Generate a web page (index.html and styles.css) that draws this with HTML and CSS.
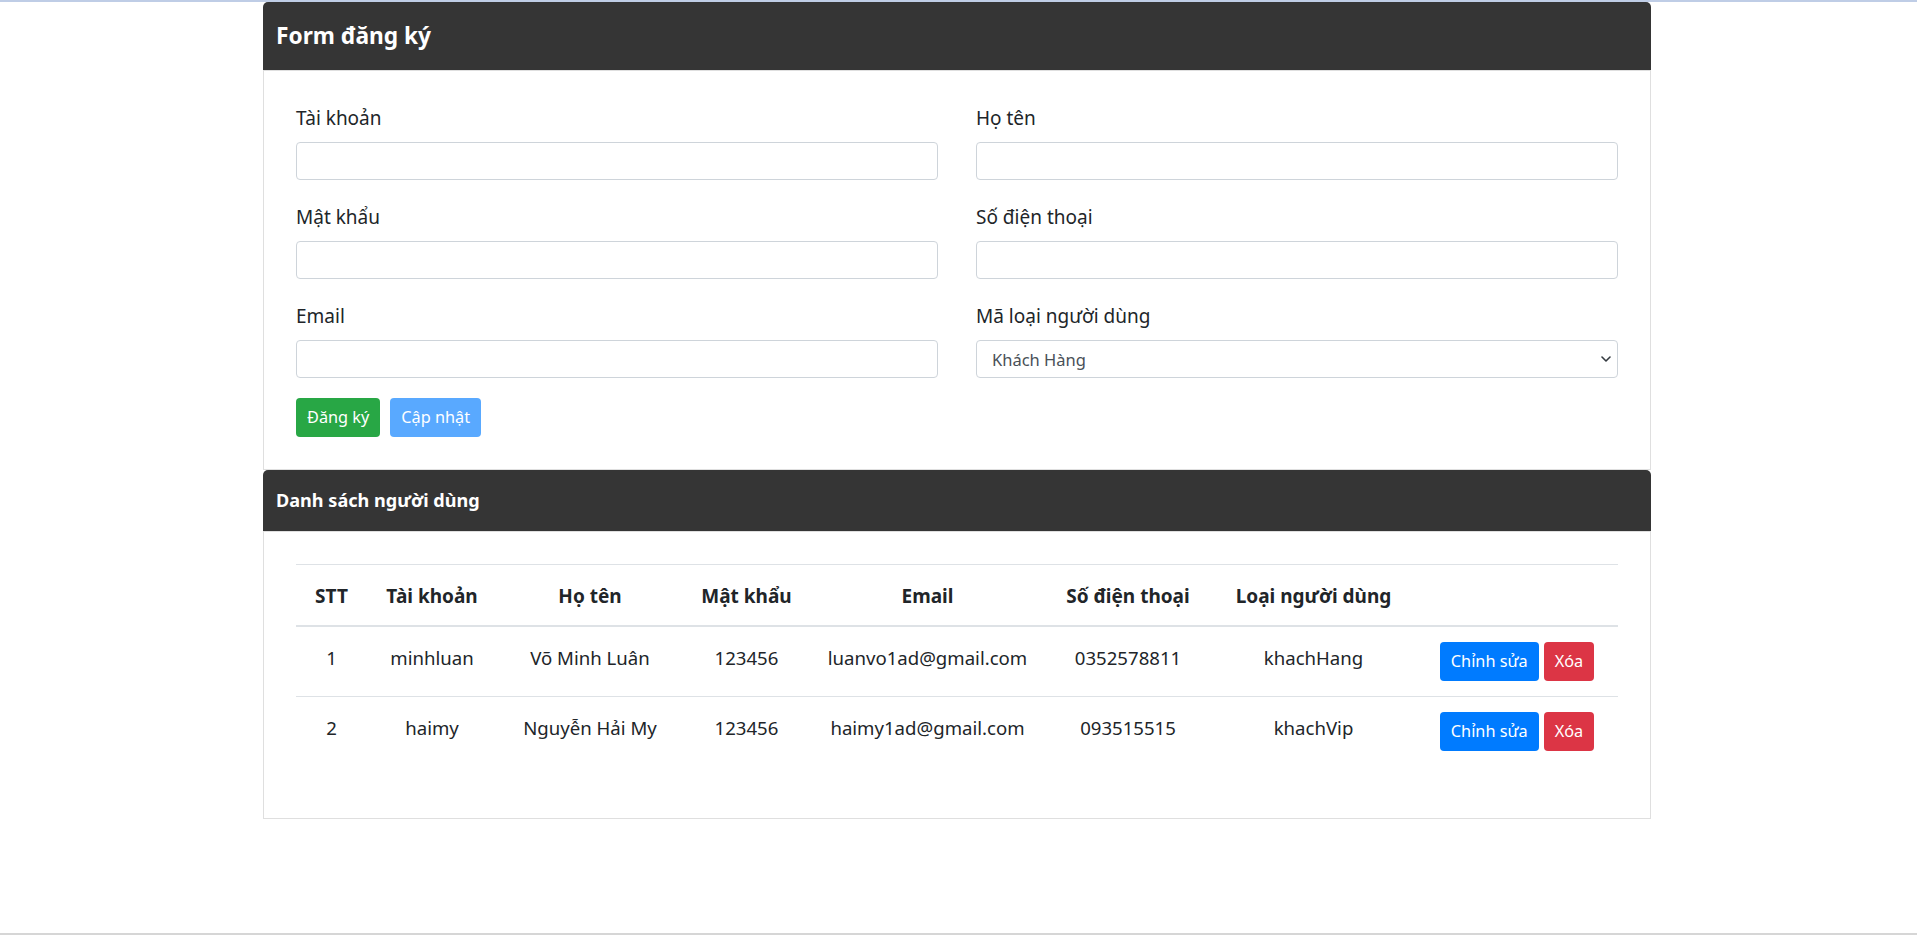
FILE: index.html
```html
<!DOCTYPE html>
<html lang="vi">
<head>
<meta charset="utf-8">
<title>Form đăng ký</title>
<link rel="stylesheet" href="styles.css">
</head>
<body>
<div class="page">
  <div class="wrap">
    <section class="card">
      <header class="card-head card-head--main">
        <h1 class="card-title">Form đăng ký</h1>
      </header>
      <div class="card-body form-body">
        <form class="form-grid">
          <div class="field">
            <label class="field-label">Tài khoản</label>
            <input class="field-input" type="text">
          </div>
          <div class="field">
            <label class="field-label">Họ tên</label>
            <input class="field-input" type="text">
          </div>
          <div class="field">
            <label class="field-label">Mật khẩu</label>
            <input class="field-input" type="password">
          </div>
          <div class="field">
            <label class="field-label">Số điện thoại</label>
            <input class="field-input" type="text">
          </div>
          <div class="field">
            <label class="field-label">Email</label>
            <input class="field-input" type="text">
          </div>
          <div class="field">
            <label class="field-label">Mã loại người dùng</label>
            <div class="select-wrap">
              <select class="field-input field-select">
                <option>Khách Hàng</option>
                <option>Khách Vip</option>
              </select>
              <svg class="chevron" width="10" height="6" viewBox="0 0 10 6"><path d="M1 1 L5 5 L9 1" fill="none" stroke="#343a40" stroke-width="1.6" stroke-linecap="round" stroke-linejoin="round"/></svg>
            </div>
          </div>
        </form>
        <div class="form-actions">
          <button class="btn btn-success" type="button">Đăng ký</button>
          <button class="btn btn-primary-muted" type="button">Cập nhật</button>
        </div>
      </div>
    </section>

    <section class="card">
      <header class="card-head card-head--list">
        <h2 class="card-title card-title--sm">Danh sách người dùng</h2>
      </header>
      <div class="card-body list-body">
        <table class="table">
          <colgroup>
            <col class="col-stt">
            <col class="col-tk">
            <col class="col-name">
            <col class="col-pw">
            <col class="col-email">
            <col class="col-phone">
            <col class="col-type">
            <col class="col-actions">
          </colgroup>
          <thead>
            <tr>
              <th>STT</th>
              <th>Tài khoản</th>
              <th>Họ tên</th>
              <th>Mật khẩu</th>
              <th>Email</th>
              <th>Số điện thoại</th>
              <th>Loại người dùng</th>
              <th></th>
            </tr>
          </thead>
          <tbody>
            <tr>
              <td>1</td>
              <td>minhluan</td>
              <td>Võ Minh Luân</td>
              <td>123456</td>
              <td>luanvo1ad@gmail.com</td>
              <td>0352578811</td>
              <td>khachHang</td>
              <td class="cell-actions">
                <div class="row-actions">
                  <button class="btn btn-primary" type="button">Chỉnh sửa</button>
                  <button class="btn btn-danger" type="button">Xóa</button>
                </div>
              </td>
            </tr>
            <tr>
              <td>2</td>
              <td>haimy</td>
              <td>Nguyễn Hải My</td>
              <td>123456</td>
              <td>haimy1ad@gmail.com</td>
              <td>093515515</td>
              <td>khachVip</td>
              <td class="cell-actions">
                <div class="row-actions">
                  <button class="btn btn-primary" type="button">Chỉnh sửa</button>
                  <button class="btn btn-danger" type="button">Xóa</button>
                </div>
              </td>
            </tr>
          </tbody>
        </table>
      </div>
    </section>
  </div>
</div>
</body>
</html>
```

FILE: styles.css
```css
* { box-sizing: border-box; }

html, body {
  margin: 0;
  padding: 0;
}

body {
  font-family: "Noto Sans", "Open Sans", sans-serif;
  color: #212529;
  background: #fff;
}

.page {
  min-height: 100vh;
  border-top: 2px solid #bfcde6;
  border-bottom: 2px solid #d6d6d6;
}

.wrap {
  width: 1388px;
  margin-left: 263px;
}

.card-head {
  background: #353535;
  color: #fff;
  display: flex;
  align-items: center;
  padding: 0 13px;
  border-radius: 5px 5px 0 0;
}

.card-head--main { height: 68px; }
.card-head--list { height: 61px; }

.card-title {
  margin: 0;
  font-weight: 700;
  font-size: 22.7px;
  line-height: 1.2;
}

.card-title--sm { font-size: 18.1px; }

.card-body {
  border: 1px solid #dfdfdf;
}

.form-body {
  padding: 33px 32px 32px;
}

.form-grid {
  display: grid;
  grid-template-columns: 1fr 1fr;
  column-gap: 38px;
  row-gap: 23px;
}

.field-label {
  display: block;
  font-size: 19px;
  line-height: 28px;
  margin-bottom: 10px;
}

.field-input {
  display: block;
  width: 100%;
  height: 38px;
  border: 1px solid #ced4da;
  border-radius: 4px;
  font-family: inherit;
  font-size: 16.5px;
  padding: 0 15px;
  color: #495057;
  background: #fff;
  -webkit-appearance: none;
  appearance: none;
  outline: none;
}

.select-wrap { position: relative; }

.chevron {
  position: absolute;
  right: 7px;
  top: 16px;
  pointer-events: none;
}

.form-actions {
  display: flex;
  gap: 10px;
  margin-top: 20px;
}

.btn {
  height: 39px;
  padding: 0 11px;
  border: 0;
  border-radius: 4px;
  font-family: inherit;
  font-size: 16.3px;
  line-height: 39px;
  color: #fff;
  cursor: pointer;
}

.btn-success { background: #28a745; }
.btn-primary-muted { background: #59a9ff; }
.btn-primary { background: #007bff; }
.btn-danger { background: #dc3545; }

.list-body {
  padding: 32px 32px 52px;
}

.table {
  width: 100%;
  table-layout: fixed;
  border-collapse: separate;
  border-spacing: 0;
  font-size: 18.6px;
  color: #212529;
}

.col-stt { width: 71px; }
.col-tk { width: 130px; }
.col-name { width: 186px; }
.col-pw { width: 127px; }
.col-email { width: 235px; }
.col-phone { width: 166px; }
.col-type { width: 205px; }
.col-actions { width: 202px; }

.table th,
.table td {
  text-align: center;
  vertical-align: top;
  padding: 16px 8px 14px;
  line-height: 30px;
  white-space: nowrap;
}

.table th {
  font-size: 19px;
  border-top: 1px solid #dee2e6;
  border-bottom: 2px solid #dee2e6;
  font-weight: 700;
}

.table td.cell-actions {
  padding: 15px 8px;
}

.table tbody tr + tr td {
  border-top: 1px solid #dee2e6;
}

.row-actions {
  display: flex;
  justify-content: center;
  gap: 5px;
}
```
